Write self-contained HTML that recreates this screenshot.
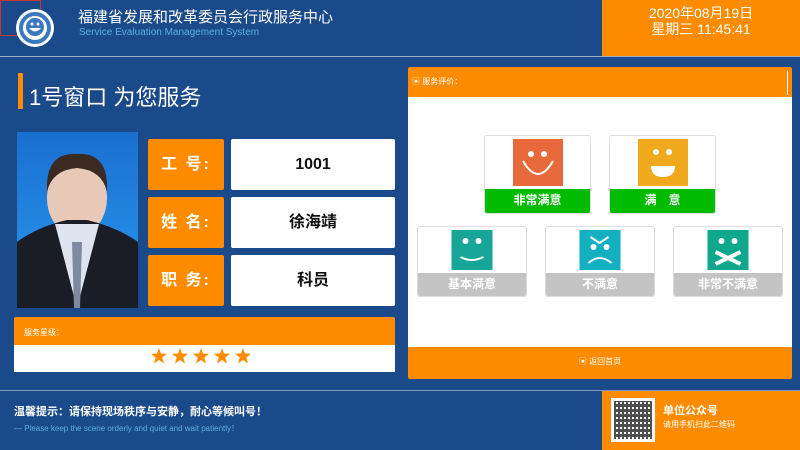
<!DOCTYPE html>
<html><head><meta charset="utf-8"><style>
*{margin:0;padding:0;box-sizing:border-box}
body{width:800px;height:450px;background:#1a4a8a;font-family:"Liberation Sans","Noto Sans CJK SC",sans-serif;position:relative;overflow:hidden;color:#fff}
.a{position:absolute}
.or{background:#ff8c00}
.lbl{position:absolute;left:148px;width:76px;height:51px;background:#ff8c00;border-radius:2px;font-size:16px;font-weight:bold;line-height:51px;text-align:center;letter-spacing:2px}
.val{position:absolute;left:231px;width:164px;height:51px;background:#fff;border-radius:2px;color:#111;font-size:16px;font-weight:bold;line-height:51px;text-align:center}
.card{position:absolute;background:#fff;border:1px solid #ddd;border-radius:3px;overflow:hidden}
.card .ic{position:absolute;left:50%;transform:translateX(-50%);top:3px}
.card .t{position:absolute;left:0;right:0;bottom:0;height:23px;line-height:23px;text-align:center;font-size:12px;font-weight:bold;color:#fff}
</style></head><body>
<div class="a" style="left:0;top:0;width:41px;height:36px;border:1px solid #c33"></div>
<svg class="a" style="left:15px;top:8px" width="40" height="40" viewBox="0 0 40 40"><circle cx="20" cy="20" r="19" fill="#fff"/><circle cx="20" cy="20" r="14" fill="#fff" stroke="#3b78c0" stroke-width="4"/><circle cx="20" cy="19" r="9" fill="#3b78c0"/><circle cx="17" cy="16" r="1.5" fill="#fff"/><circle cx="23" cy="16" r="1.5" fill="#fff"/><path d="M14 20 Q20 27 26 20Z" fill="#fff"/></svg>
<div class="a" style="left:78px;top:6px;font-size:15px;color:#fff">福建省发展和改革委员会行政服务中心</div>
<div class="a" style="left:79px;top:27px;font-size:10px;color:#5cb0e0">Service Evaluation Management System</div>
<div class="a or" style="left:602px;top:0;width:198px;height:56px;text-align:center;font-size:14px;line-height:16px;padding-top:5px">2020年08月19日<br>星期三 11:45:41</div>
<div class="a" style="left:0;top:56px;width:800px;height:1px;background:#a0b0c8"></div>
<div class="a or" style="left:18px;top:73px;width:5px;height:36px"></div>
<div class="a" style="left:29px;top:80px;font-size:22px">1号窗口 为您服务</div>
<div class="a" style="left:17px;top:132px;width:121px;height:176px;background:linear-gradient(#1a6fd0,#2a9af0)">
<svg width="121" height="176"><ellipse cx="60" cy="66" rx="30" ry="38" fill="#e8c9b8"/><path d="M30 60 Q28 20 60 22 Q92 20 90 60 Q85 38 60 36 Q35 38 30 60Z" fill="#3a2a22"/><path d="M0 176 L0 110 Q20 95 50 88 L70 88 Q100 95 121 110 L121 176Z" fill="#1a1d25"/><path d="M38 92 L60 176 L82 92Z" fill="#dde3ef"/><path d="M55 110 L65 110 L63 176 L57 176Z" fill="#7d8aa0"/></svg></div>
<div class="lbl" style="top:139px">工&nbsp;号:</div><div class="val" style="top:139px">1001</div>
<div class="lbl" style="top:197px">姓&nbsp;名:</div><div class="val" style="top:197px">徐海靖</div>
<div class="lbl" style="top:255px">职&nbsp;务:</div><div class="val" style="top:255px">科员</div>
<div class="a or" style="left:14px;top:317px;width:381px;height:28px;font-size:8px;padding:10px 0 0 10px;border-radius:2px 2px 0 0">服务星级：</div>
<div class="a" style="left:14px;top:345px;width:381px;height:27px;background:#fff"></div>
<svg class="a" style="left:151px;top:348px" width="104" height="16" viewBox="0 0 104 16"><g fill="#ff8c00"><path id="s" d="M8 0 L10 5.5 L16 5.8 L11.3 9.5 L13 15.5 L8 12 L3 15.5 L4.7 9.5 L0 5.8 L6 5.5Z"/><use href="#s" x="21"/><use href="#s" x="42"/><use href="#s" x="63"/><use href="#s" x="84"/></g></svg>
<div class="a or" style="left:408px;top:67px;width:384px;height:30px;font-size:8px;padding:9px 0 0 4px;border-radius:2px 2px 0 0">▣ 服务评价：</div>
<div class="a" style="left:787px;top:71px;width:1px;height:24px;background:#fff"></div>
<div class="a" style="left:408px;top:97px;width:384px;height:250px;background:#fff"></div>
<div class="a or" style="left:408px;top:347px;width:384px;height:32px;font-size:8px;text-align:center;line-height:30px;border-radius:0 0 2px 2px">▣ 返回首页</div>
<div class="card" style="left:484px;top:135px;width:107px;height:79px"><svg class="ic" width="50" height="47"><rect width="50" height="47" fill="#e8693c"/><circle cx="18" cy="15" r="3" fill="#fff"/><circle cx="31" cy="15" r="3" fill="#fff"/><path d="M10 22 Q25 48 40 22" fill="none" stroke="#fff" stroke-width="2"/></svg><div class="t" style="background:#00bb00;height:24px">非常满意</div></div>
<div class="card" style="left:609px;top:135px;width:107px;height:79px"><svg class="ic" width="50" height="47"><rect width="50" height="47" fill="#f0a81c"/><circle cx="18" cy="13" r="3" fill="#fff"/><circle cx="31" cy="13" r="3" fill="#fff"/><path d="M13 27 L37 27 Q37 38 25 38 Q13 38 13 27Z" fill="#fff"/></svg><div class="t" style="background:#00bb00;height:24px">满　意</div></div>
<div class="card" style="left:417px;top:226px;width:110px;height:71px"><svg class="ic" width="41" height="40"><rect width="41" height="40" fill="#17a597"/><circle cx="14" cy="11" r="3" fill="#fff"/><circle cx="27" cy="11" r="3" fill="#fff"/><path d="M9 27 Q20 33 32 27" fill="none" stroke="#fff" stroke-width="2"/></svg><div class="t" style="background:#c4c4c4">基本满意</div></div>
<div class="card" style="left:545px;top:226px;width:110px;height:71px"><svg class="ic" width="41" height="40"><rect width="41" height="40" fill="#12b0c0"/><path d="M11 7 L20 13 L29 7" fill="none" stroke="#fff" stroke-width="2"/><circle cx="14" cy="17" r="3" fill="#fff"/><circle cx="27" cy="17" r="3" fill="#fff"/><path d="M9 33 Q20 23 32 33" fill="none" stroke="#fff" stroke-width="2"/></svg><div class="t" style="background:#c4c4c4">不满意</div></div>
<div class="card" style="left:673px;top:226px;width:110px;height:71px"><svg class="ic" width="41" height="40"><rect width="41" height="40" fill="#0fa88c"/><circle cx="14" cy="11" r="3" fill="#fff"/><circle cx="27" cy="11" r="3" fill="#fff"/><path d="M8 22 L33 34 M8 34 L33 22" stroke="#fff" stroke-width="4"/></svg><div class="t" style="background:#c4c4c4">非常不满意</div></div>
<div class="a" style="left:0;top:390px;width:800px;height:1px;background:#7d95bd"></div>
<div class="a" style="left:14px;top:403px;font-size:11px;font-weight:bold">温馨提示：请保持现场秩序与安静，耐心等候叫号！</div>
<div class="a" style="left:14px;top:423px;font-size:8px;color:#5cb0e0">— Please keep the scene orderly and quiet and wait patiently！</div>
<div class="a or" style="left:602px;top:391px;width:198px;height:59px"></div>
<div class="a" style="left:611px;top:398px;width:44px;height:44px;background:#fff;padding:3px"><div style="width:38px;height:38px;background:repeating-linear-gradient(90deg,#222 0 2px,transparent 2px 4px),repeating-linear-gradient(0deg,#fff 0 2px,transparent 2px 5px),#222;opacity:.8"></div></div>
<div class="a" style="left:663px;top:402px;font-size:11px;font-weight:bold">单位公众号</div>
<div class="a" style="left:663px;top:419px;font-size:8px">请用手机扫此二维码</div>
</body></html>
